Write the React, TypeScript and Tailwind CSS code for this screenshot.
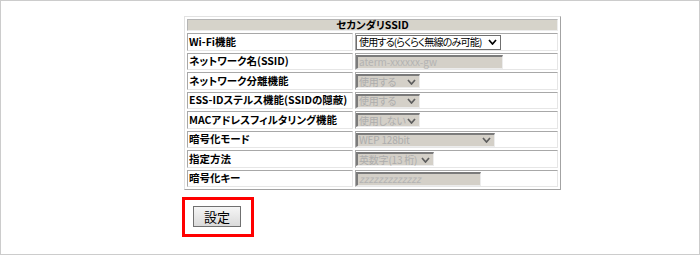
import React from "react";

function Chevron({ color }: { color: string }) {
  return (
    <svg width="9" height="6" viewBox="0 0 9 6" className="shrink-0">
      <polyline points="1,1 4.5,5 8,1" fill="none" stroke={color} strokeWidth="1.7" />
    </svg>
  );
}

function DisabledSelect({ text, width }: { text: string; width: string }) {
  return (
    <div
      className={`${width} h-[14px] bg-[#d4d0c8] border-t-2 border-l-2 border-r border-b border-t-[#7b7b7b] border-l-[#7b7b7b] border-r-[#ececec] border-b-[#ececec] flex items-center justify-between pl-[1px] pr-[3px] text-[10px] tracking-[-0.2px] leading-none text-[#adadad]`}
    >
      <span className="whitespace-nowrap">{text}</span>
      <Chevron color="#5e5e5e" />
    </div>
  );
}

function DisabledInput({ text, width, italic }: { text: string; width: string; italic?: boolean }) {
  return (
    <div
      className={`${width} h-[14px] bg-[#d4d0c8] border-t-2 border-l-2 border-r border-b border-t-[#7b7b7b] border-l-[#7b7b7b] border-r-[#ececec] border-b-[#ececec] flex items-center pl-[1px] text-[10px] leading-none text-[#b3b3b3] ${italic ? "italic" : ""}`}
    >
      <span className="whitespace-nowrap">{text}</span>
    </div>
  );
}

type Row = { label: string; h: string; control: React.ReactNode };

export default function App() {
  const rows: Row[] = [
    {
      label: "Wi-Fi機能",
      h: "h-[16px]",
      control: (
        <div className="w-[145px] h-[15px] bg-white border border-[#6f6f6f] flex items-center justify-between pl-[2px] pr-[3px] text-[10px] tracking-[-0.8px] leading-none text-black">
          <span className="whitespace-nowrap">使用する(らくらく無線のみ可能)</span>
          <Chevron color="#000000" />
        </div>
      ),
    },
    { label: "ネットワーク名(SSID)", h: "h-[15px]", control: <DisabledInput text="aterm-xxxxxx-gw" width="w-[147px]" /> },
    { label: "ネットワーク分離機能", h: "h-[16px]", control: <DisabledSelect text="使用する" width="w-[64px]" /> },
    { label: "ESS-IDステルス機能(SSIDの隠蔽)", h: "h-[15px]", control: <DisabledSelect text="使用する" width="w-[64px]" /> },
    { label: "MACアドレスフィルタリング機能", h: "h-[16px]", control: <DisabledSelect text="使用しない" width="w-[64px]" /> },
    { label: "暗号化モード", h: "h-[15px]", control: <DisabledSelect text="WEP 128bit" width="w-[139px]" /> },
    { label: "指定方法", h: "h-[16px]", control: <DisabledSelect text="英数字(13 桁)" width="w-[78px]" /> },
    { label: "暗号化キー", h: "h-[15px]", control: <DisabledInput text="zzzzzzzzzzzzz" width="w-[125px]" italic /> },
  ];

  return (
    <div className="w-[700px] h-[255px] border border-[#cccccc] bg-white font-['Noto_Sans_CJK_JP',sans-serif] [font-feature-settings:'palt'] text-black">
      <table className="ml-[183px] mt-[15px] w-[377px] table-fixed border-separate border-spacing-[2px] border border-t-[#e2e2e2] border-l-[#e2e2e2] border-r-[#a3a3a3] border-b-[#a3a3a3]">
        <colgroup>
          <col className="w-[166px]" />
          <col />
        </colgroup>
        <tbody>
          <tr>
            <td
              colSpan={2}
              className="p-0 bg-[#d6d3ca] border border-t-[#b5b5b5] border-l-[#b5b5b5] border-r-[#ececec] border-b-[#ececec]"
            >
              <div className="h-[10px] flex items-center justify-center text-[10.5px] font-bold leading-none">
                セカンダリSSID
              </div>
            </td>
          </tr>
          {rows.map((r) => (
            <tr key={r.label}>
              <td className="p-0 border border-t-[#a8a8a8] border-l-[#a8a8a8] border-r-[#e6e6e6] border-b-[#e6e6e6]">
                <div className={`${r.h} flex items-center pl-[1px] text-[10.5px] font-bold leading-none whitespace-nowrap`}>
                  {r.label}
                </div>
              </td>
              <td className="p-0 border border-t-[#a8a8a8] border-l-[#a8a8a8] border-r-[#e6e6e6] border-b-[#e6e6e6]">
                <div className={`${r.h} flex items-center`}>{r.control}</div>
              </td>
            </tr>
          ))}
        </tbody>
      </table>
      <div className="ml-[181px] mt-[7px] w-[72px] h-[40px] border-[3px] border-[#ff0000] pl-[8px] pt-[6px]">
        <div className="w-[48px] h-[21px] border border-[#707070] bg-linear-to-b from-[#f6f6f6] to-[#dadada] flex items-center justify-center text-[13px] leading-none">
          設定
        </div>
      </div>
    </div>
  );
}
